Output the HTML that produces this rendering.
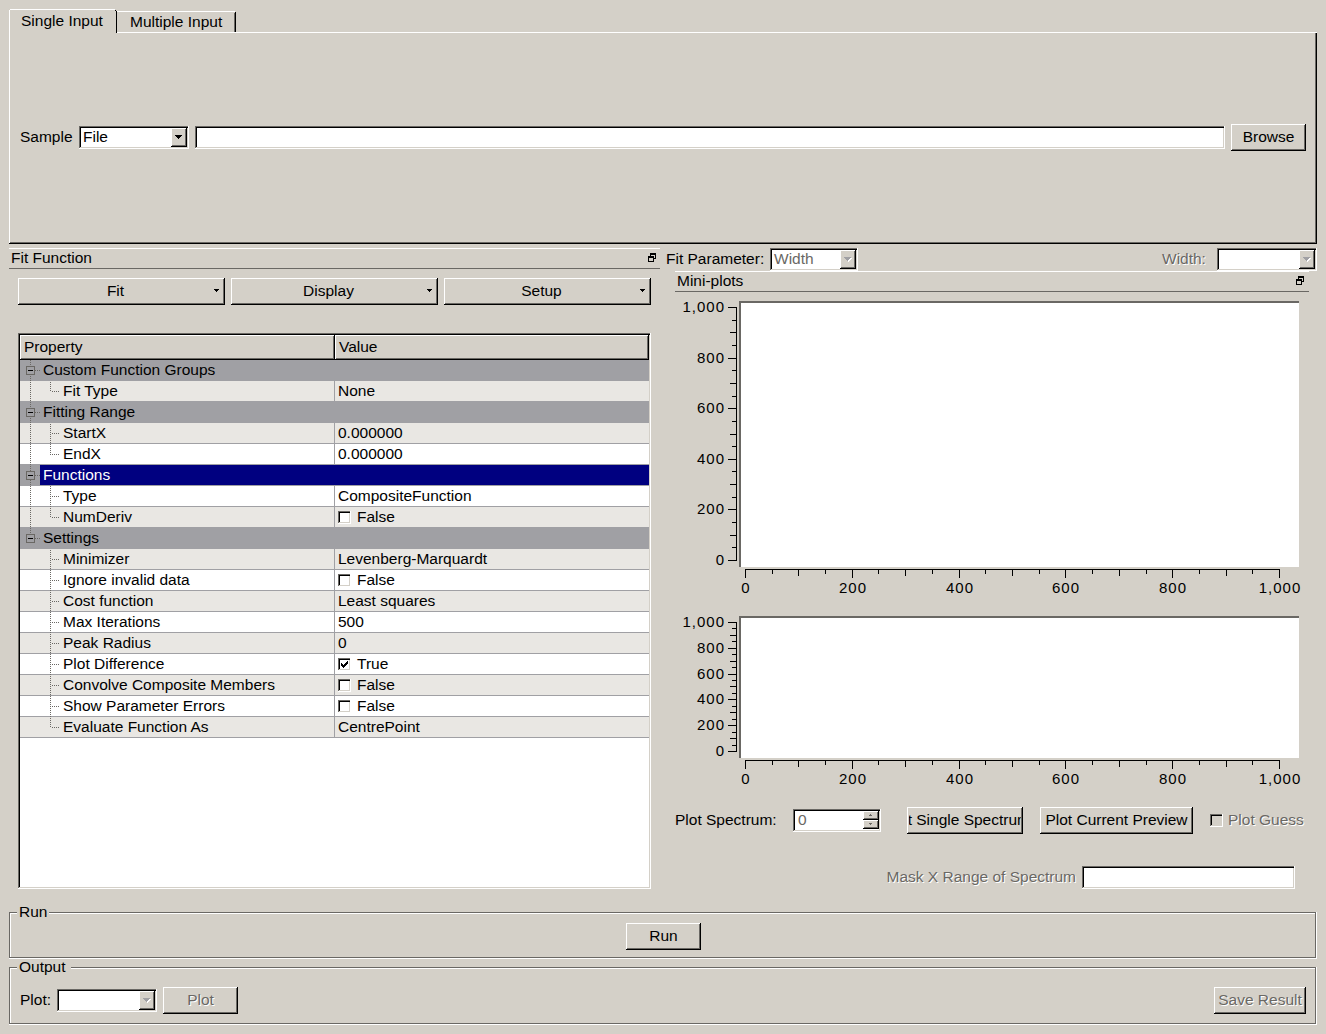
<!DOCTYPE html>
<html><head><meta charset="utf-8"><style>
html,body{margin:0;padding:0;}
body{width:1326px;height:1034px;background:#d4d0c8;position:relative;overflow:hidden;font-family:"Liberation Sans",sans-serif;}
body>div{position:absolute;}
</style></head><body>
<div style="left:9px;top:32px;width:1308px;height:1px;background:#ffffff;"></div>
<div style="left:9px;top:10px;width:1px;height:234px;background:#ffffff;"></div>
<div style="left:9px;top:243px;width:1308px;height:1px;background:#000000;"></div>
<div style="left:10px;top:242px;width:1306px;height:1px;background:#6a6864;"></div>
<div style="left:1316px;top:32px;width:1px;height:212px;background:#000000;"></div>
<div style="left:1315px;top:33px;width:1px;height:210px;background:#6a6864;"></div>
<div style="left:10px;top:10px;width:106px;height:23px;background:#d4d0c8;"></div>
<div style="left:10px;top:9px;width:105px;height:1px;background:#ffffff;"></div>
<div style="left:9px;top:10px;width:1px;height:23px;background:#ffffff;"></div>
<div style="left:116px;top:11px;width:1px;height:22px;background:#000000;"></div>
<div style="left:115px;top:10px;width:1px;height:1px;background:#000000;"></div>
<div style="left:117px;top:11px;width:118px;height:1px;background:#ffffff;"></div>
<div style="left:235px;top:12px;width:1px;height:20px;background:#000000;"></div>
<div style="left:234px;top:13px;width:1px;height:19px;background:#6a6864;"></div>
<div style="left:117px;top:32px;width:1200px;height:1px;background:#ffffff;"></div>
<div style="left:21px;top:12px;font-size:15.5px;line-height:18px;color:#000000;white-space:nowrap;">Single Input</div>
<div style="left:130px;top:13px;font-size:15.5px;line-height:18px;color:#000000;white-space:nowrap;">Multiple Input</div>
<div style="left:20px;top:128px;font-size:15.5px;line-height:18px;color:#000000;white-space:nowrap;">Sample</div>
<div style="left:79px;top:126px;width:110px;height:23px;background:#ffffff;"></div>
<div style="left:79px;top:126px;width:110px;height:1px;background:#6a6864;"></div>
<div style="left:79px;top:126px;width:1px;height:23px;background:#6a6864;"></div>
<div style="left:79px;top:148px;width:110px;height:1px;background:#ffffff;"></div>
<div style="left:188px;top:126px;width:1px;height:23px;background:#ffffff;"></div>
<div style="left:80px;top:127px;width:108px;height:1px;background:#000000;"></div>
<div style="left:80px;top:127px;width:1px;height:21px;background:#000000;"></div>
<div style="left:80px;top:147px;width:108px;height:1px;background:#d4d0c8;"></div>
<div style="left:187px;top:128px;width:1px;height:20px;background:#d4d0c8;"></div>
<div style="left:171px;top:128px;width:16px;height:19px;background:#d4d0c8;"></div>
<div style="left:171px;top:128px;width:16px;height:1px;background:#ffffff;"></div>
<div style="left:171px;top:128px;width:1px;height:19px;background:#ffffff;"></div>
<div style="left:171px;top:146px;width:16px;height:1px;background:#000000;"></div>
<div style="left:186px;top:128px;width:1px;height:19px;background:#000000;"></div>
<div style="left:172px;top:145px;width:14px;height:1px;background:#6a6864;"></div>
<div style="left:185px;top:129px;width:1px;height:17px;background:#6a6864;"></div>
<div style="left:175px;top:135px;width:7px;height:1px;background:#000000;"></div>
<div style="left:176px;top:136px;width:5px;height:1px;background:#000000;"></div>
<div style="left:177px;top:137px;width:3px;height:1px;background:#000000;"></div>
<div style="left:178px;top:138px;width:1px;height:1px;background:#000000;"></div>
<div style="left:83px;top:128px;font-size:15.5px;line-height:18px;color:#000000;white-space:nowrap;">File</div>
<div style="left:195px;top:126px;width:1030px;height:23px;background:#ffffff;"></div>
<div style="left:195px;top:126px;width:1030px;height:1px;background:#6a6864;"></div>
<div style="left:195px;top:126px;width:1px;height:23px;background:#6a6864;"></div>
<div style="left:195px;top:148px;width:1030px;height:1px;background:#ffffff;"></div>
<div style="left:1224px;top:126px;width:1px;height:23px;background:#ffffff;"></div>
<div style="left:196px;top:127px;width:1028px;height:1px;background:#000000;"></div>
<div style="left:196px;top:127px;width:1px;height:21px;background:#000000;"></div>
<div style="left:196px;top:147px;width:1028px;height:1px;background:#d4d0c8;"></div>
<div style="left:1223px;top:128px;width:1px;height:20px;background:#d4d0c8;"></div>
<div style="left:1231px;top:124px;width:75px;height:27px;background:#d4d0c8;"></div>
<div style="left:1231px;top:124px;width:75px;height:1px;background:#ffffff;"></div>
<div style="left:1231px;top:124px;width:1px;height:27px;background:#ffffff;"></div>
<div style="left:1231px;top:150px;width:75px;height:1px;background:#000000;"></div>
<div style="left:1305px;top:124px;width:1px;height:27px;background:#000000;"></div>
<div style="left:1232px;top:149px;width:73px;height:1px;background:#6a6864;"></div>
<div style="left:1304px;top:125px;width:1px;height:25px;background:#6a6864;"></div>
<div style="left:1231px;top:128px;font-size:15.5px;line-height:18px;color:#000000;white-space:nowrap;width:75px;text-align:center;">Browse</div>
<div style="left:9px;top:248px;width:651px;height:1px;background:#ffffff;"></div>
<div style="left:9px;top:268px;width:651px;height:1px;background:#6a6864;"></div>
<div style="left:11px;top:249px;font-size:15.5px;line-height:18px;color:#000000;white-space:nowrap;">Fit Function</div>
<div style="left:650px;top:253px;width:6px;height:1px;background:#000000;"></div>
<div style="left:650px;top:254px;width:6px;height:1px;background:#000000;"></div>
<div style="left:650px;top:253px;width:1px;height:6px;background:#000000;"></div>
<div style="left:655px;top:253px;width:1px;height:6px;background:#000000;"></div>
<div style="left:650px;top:258px;width:6px;height:1px;background:#000000;"></div>
<div style="left:648px;top:256px;width:6px;height:6px;background:#d4d0c8;"></div>
<div style="left:648px;top:256px;width:6px;height:1px;background:#000000;"></div>
<div style="left:648px;top:257px;width:6px;height:1px;background:#000000;"></div>
<div style="left:648px;top:256px;width:1px;height:6px;background:#000000;"></div>
<div style="left:653px;top:256px;width:1px;height:6px;background:#000000;"></div>
<div style="left:648px;top:261px;width:6px;height:1px;background:#000000;"></div>
<div style="left:18px;top:278px;width:207px;height:27px;background:#d4d0c8;"></div>
<div style="left:18px;top:278px;width:207px;height:1px;background:#ffffff;"></div>
<div style="left:18px;top:278px;width:1px;height:27px;background:#ffffff;"></div>
<div style="left:18px;top:304px;width:207px;height:1px;background:#000000;"></div>
<div style="left:224px;top:278px;width:1px;height:27px;background:#000000;"></div>
<div style="left:19px;top:303px;width:205px;height:1px;background:#6a6864;"></div>
<div style="left:223px;top:279px;width:1px;height:25px;background:#6a6864;"></div>
<div style="left:18px;top:282px;font-size:15.5px;line-height:18px;color:#000000;white-space:nowrap;width:195px;text-align:center;">Fit</div>
<div style="left:214px;top:289px;width:5px;height:1px;background:#000000;"></div>
<div style="left:215px;top:290px;width:3px;height:1px;background:#000000;"></div>
<div style="left:216px;top:291px;width:1px;height:1px;background:#000000;"></div>
<div style="left:231px;top:278px;width:207px;height:27px;background:#d4d0c8;"></div>
<div style="left:231px;top:278px;width:207px;height:1px;background:#ffffff;"></div>
<div style="left:231px;top:278px;width:1px;height:27px;background:#ffffff;"></div>
<div style="left:231px;top:304px;width:207px;height:1px;background:#000000;"></div>
<div style="left:437px;top:278px;width:1px;height:27px;background:#000000;"></div>
<div style="left:232px;top:303px;width:205px;height:1px;background:#6a6864;"></div>
<div style="left:436px;top:279px;width:1px;height:25px;background:#6a6864;"></div>
<div style="left:231px;top:282px;font-size:15.5px;line-height:18px;color:#000000;white-space:nowrap;width:195px;text-align:center;">Display</div>
<div style="left:427px;top:289px;width:5px;height:1px;background:#000000;"></div>
<div style="left:428px;top:290px;width:3px;height:1px;background:#000000;"></div>
<div style="left:429px;top:291px;width:1px;height:1px;background:#000000;"></div>
<div style="left:444px;top:278px;width:207px;height:27px;background:#d4d0c8;"></div>
<div style="left:444px;top:278px;width:207px;height:1px;background:#ffffff;"></div>
<div style="left:444px;top:278px;width:1px;height:27px;background:#ffffff;"></div>
<div style="left:444px;top:304px;width:207px;height:1px;background:#000000;"></div>
<div style="left:650px;top:278px;width:1px;height:27px;background:#000000;"></div>
<div style="left:445px;top:303px;width:205px;height:1px;background:#6a6864;"></div>
<div style="left:649px;top:279px;width:1px;height:25px;background:#6a6864;"></div>
<div style="left:444px;top:282px;font-size:15.5px;line-height:18px;color:#000000;white-space:nowrap;width:195px;text-align:center;">Setup</div>
<div style="left:640px;top:289px;width:5px;height:1px;background:#000000;"></div>
<div style="left:641px;top:290px;width:3px;height:1px;background:#000000;"></div>
<div style="left:642px;top:291px;width:1px;height:1px;background:#000000;"></div>
<div style="left:18px;top:333px;width:633px;height:556px;background:#ffffff;"></div>
<div style="left:18px;top:333px;width:633px;height:1px;background:#6a6864;"></div>
<div style="left:18px;top:333px;width:1px;height:556px;background:#6a6864;"></div>
<div style="left:18px;top:888px;width:633px;height:1px;background:#ffffff;"></div>
<div style="left:650px;top:333px;width:1px;height:556px;background:#ffffff;"></div>
<div style="left:19px;top:334px;width:631px;height:1px;background:#000000;"></div>
<div style="left:19px;top:334px;width:1px;height:554px;background:#000000;"></div>
<div style="left:19px;top:887px;width:631px;height:1px;background:#d4d0c8;"></div>
<div style="left:649px;top:335px;width:1px;height:553px;background:#d4d0c8;"></div>
<div style="left:20px;top:335px;width:315px;height:25px;background:#d4d0c8;"></div>
<div style="left:20px;top:335px;width:315px;height:1px;background:#ffffff;"></div>
<div style="left:20px;top:335px;width:1px;height:25px;background:#ffffff;"></div>
<div style="left:20px;top:359px;width:315px;height:1px;background:#000000;"></div>
<div style="left:334px;top:335px;width:1px;height:25px;background:#000000;"></div>
<div style="left:21px;top:358px;width:313px;height:1px;background:#6a6864;"></div>
<div style="left:333px;top:336px;width:1px;height:23px;background:#6a6864;"></div>
<div style="left:24px;top:338px;font-size:15.5px;line-height:18px;color:#000000;white-space:nowrap;">Property</div>
<div style="left:335px;top:335px;width:314px;height:25px;background:#d4d0c8;"></div>
<div style="left:335px;top:335px;width:314px;height:1px;background:#ffffff;"></div>
<div style="left:335px;top:335px;width:1px;height:25px;background:#ffffff;"></div>
<div style="left:335px;top:359px;width:314px;height:1px;background:#000000;"></div>
<div style="left:648px;top:335px;width:1px;height:25px;background:#000000;"></div>
<div style="left:336px;top:358px;width:312px;height:1px;background:#6a6864;"></div>
<div style="left:647px;top:336px;width:1px;height:23px;background:#6a6864;"></div>
<div style="left:339px;top:338px;font-size:15.5px;line-height:18px;color:#000000;white-space:nowrap;">Value</div>
<div style="left:20px;top:360px;width:629px;height:21px;background:#a0a0a4;"></div>
<div style="left:43px;top:361px;font-size:15.5px;line-height:18px;color:#000000;white-space:nowrap;">Custom Function Groups</div>
<div style="left:20px;top:381px;width:629px;height:20px;background:#e9e7e3;"></div>
<div style="left:20px;top:401px;width:629px;height:1px;background:#a0a0a4;"></div>
<div style="left:334px;top:381px;width:1px;height:21px;background:#a0a0a4;"></div>
<div style="left:63px;top:382px;font-size:15.5px;line-height:18px;color:#000000;white-space:nowrap;">Fit Type</div>
<div style="left:338px;top:382px;font-size:15.5px;line-height:18px;color:#000000;white-space:nowrap;">None</div>
<div style="left:20px;top:402px;width:629px;height:21px;background:#a0a0a4;"></div>
<div style="left:43px;top:403px;font-size:15.5px;line-height:18px;color:#000000;white-space:nowrap;">Fitting Range</div>
<div style="left:20px;top:423px;width:629px;height:20px;background:#e9e7e3;"></div>
<div style="left:20px;top:443px;width:629px;height:1px;background:#a0a0a4;"></div>
<div style="left:334px;top:423px;width:1px;height:21px;background:#a0a0a4;"></div>
<div style="left:63px;top:424px;font-size:15.5px;line-height:18px;color:#000000;white-space:nowrap;">StartX</div>
<div style="left:338px;top:424px;font-size:15.5px;line-height:18px;color:#000000;white-space:nowrap;">0.000000</div>
<div style="left:20px;top:444px;width:629px;height:20px;background:#ffffff;"></div>
<div style="left:20px;top:464px;width:629px;height:1px;background:#a0a0a4;"></div>
<div style="left:334px;top:444px;width:1px;height:21px;background:#a0a0a4;"></div>
<div style="left:63px;top:445px;font-size:15.5px;line-height:18px;color:#000000;white-space:nowrap;">EndX</div>
<div style="left:338px;top:445px;font-size:15.5px;line-height:18px;color:#000000;white-space:nowrap;">0.000000</div>
<div style="left:20px;top:465px;width:629px;height:21px;background:#a0a0a4;"></div>
<div style="left:40px;top:465px;width:609px;height:20px;background:#000080;"></div>
<div style="left:43px;top:466px;font-size:15.5px;line-height:18px;color:#ffffff;white-space:nowrap;">Functions</div>
<div style="left:20px;top:486px;width:629px;height:20px;background:#ffffff;"></div>
<div style="left:20px;top:506px;width:629px;height:1px;background:#a0a0a4;"></div>
<div style="left:334px;top:486px;width:1px;height:21px;background:#a0a0a4;"></div>
<div style="left:63px;top:487px;font-size:15.5px;line-height:18px;color:#000000;white-space:nowrap;">Type</div>
<div style="left:338px;top:487px;font-size:15.5px;line-height:18px;color:#000000;white-space:nowrap;">CompositeFunction</div>
<div style="left:20px;top:507px;width:629px;height:20px;background:#e9e7e3;"></div>
<div style="left:20px;top:527px;width:629px;height:1px;background:#a0a0a4;"></div>
<div style="left:334px;top:507px;width:1px;height:21px;background:#a0a0a4;"></div>
<div style="left:63px;top:508px;font-size:15.5px;line-height:18px;color:#000000;white-space:nowrap;">NumDeriv</div>
<div style="left:338px;top:511px;width:13px;height:13px;background:#ffffff;"></div>
<div style="left:338px;top:511px;width:13px;height:1px;background:#6a6864;"></div>
<div style="left:338px;top:511px;width:1px;height:13px;background:#6a6864;"></div>
<div style="left:338px;top:523px;width:13px;height:1px;background:#ffffff;"></div>
<div style="left:350px;top:511px;width:1px;height:13px;background:#ffffff;"></div>
<div style="left:339px;top:512px;width:11px;height:1px;background:#000000;"></div>
<div style="left:339px;top:512px;width:1px;height:11px;background:#000000;"></div>
<div style="left:339px;top:522px;width:11px;height:1px;background:#d4d0c8;"></div>
<div style="left:349px;top:513px;width:1px;height:10px;background:#d4d0c8;"></div>
<div style="left:357px;top:508px;font-size:15.5px;line-height:18px;color:#000000;white-space:nowrap;">False</div>
<div style="left:20px;top:528px;width:629px;height:21px;background:#a0a0a4;"></div>
<div style="left:43px;top:529px;font-size:15.5px;line-height:18px;color:#000000;white-space:nowrap;">Settings</div>
<div style="left:20px;top:549px;width:629px;height:20px;background:#e9e7e3;"></div>
<div style="left:20px;top:569px;width:629px;height:1px;background:#a0a0a4;"></div>
<div style="left:334px;top:549px;width:1px;height:21px;background:#a0a0a4;"></div>
<div style="left:63px;top:550px;font-size:15.5px;line-height:18px;color:#000000;white-space:nowrap;">Minimizer</div>
<div style="left:338px;top:550px;font-size:15.5px;line-height:18px;color:#000000;white-space:nowrap;">Levenberg-Marquardt</div>
<div style="left:20px;top:570px;width:629px;height:20px;background:#ffffff;"></div>
<div style="left:20px;top:590px;width:629px;height:1px;background:#a0a0a4;"></div>
<div style="left:334px;top:570px;width:1px;height:21px;background:#a0a0a4;"></div>
<div style="left:63px;top:571px;font-size:15.5px;line-height:18px;color:#000000;white-space:nowrap;">Ignore invalid data</div>
<div style="left:338px;top:574px;width:13px;height:13px;background:#ffffff;"></div>
<div style="left:338px;top:574px;width:13px;height:1px;background:#6a6864;"></div>
<div style="left:338px;top:574px;width:1px;height:13px;background:#6a6864;"></div>
<div style="left:338px;top:586px;width:13px;height:1px;background:#ffffff;"></div>
<div style="left:350px;top:574px;width:1px;height:13px;background:#ffffff;"></div>
<div style="left:339px;top:575px;width:11px;height:1px;background:#000000;"></div>
<div style="left:339px;top:575px;width:1px;height:11px;background:#000000;"></div>
<div style="left:339px;top:585px;width:11px;height:1px;background:#d4d0c8;"></div>
<div style="left:349px;top:576px;width:1px;height:10px;background:#d4d0c8;"></div>
<div style="left:357px;top:571px;font-size:15.5px;line-height:18px;color:#000000;white-space:nowrap;">False</div>
<div style="left:20px;top:591px;width:629px;height:20px;background:#e9e7e3;"></div>
<div style="left:20px;top:611px;width:629px;height:1px;background:#a0a0a4;"></div>
<div style="left:334px;top:591px;width:1px;height:21px;background:#a0a0a4;"></div>
<div style="left:63px;top:592px;font-size:15.5px;line-height:18px;color:#000000;white-space:nowrap;">Cost function</div>
<div style="left:338px;top:592px;font-size:15.5px;line-height:18px;color:#000000;white-space:nowrap;">Least squares</div>
<div style="left:20px;top:612px;width:629px;height:20px;background:#ffffff;"></div>
<div style="left:20px;top:632px;width:629px;height:1px;background:#a0a0a4;"></div>
<div style="left:334px;top:612px;width:1px;height:21px;background:#a0a0a4;"></div>
<div style="left:63px;top:613px;font-size:15.5px;line-height:18px;color:#000000;white-space:nowrap;">Max Iterations</div>
<div style="left:338px;top:613px;font-size:15.5px;line-height:18px;color:#000000;white-space:nowrap;">500</div>
<div style="left:20px;top:633px;width:629px;height:20px;background:#e9e7e3;"></div>
<div style="left:20px;top:653px;width:629px;height:1px;background:#a0a0a4;"></div>
<div style="left:334px;top:633px;width:1px;height:21px;background:#a0a0a4;"></div>
<div style="left:63px;top:634px;font-size:15.5px;line-height:18px;color:#000000;white-space:nowrap;">Peak Radius</div>
<div style="left:338px;top:634px;font-size:15.5px;line-height:18px;color:#000000;white-space:nowrap;">0</div>
<div style="left:20px;top:654px;width:629px;height:20px;background:#ffffff;"></div>
<div style="left:20px;top:674px;width:629px;height:1px;background:#a0a0a4;"></div>
<div style="left:334px;top:654px;width:1px;height:21px;background:#a0a0a4;"></div>
<div style="left:63px;top:655px;font-size:15.5px;line-height:18px;color:#000000;white-space:nowrap;">Plot Difference</div>
<div style="left:338px;top:658px;width:13px;height:13px;background:#ffffff;"></div>
<div style="left:338px;top:658px;width:13px;height:1px;background:#6a6864;"></div>
<div style="left:338px;top:658px;width:1px;height:13px;background:#6a6864;"></div>
<div style="left:338px;top:670px;width:13px;height:1px;background:#ffffff;"></div>
<div style="left:350px;top:658px;width:1px;height:13px;background:#ffffff;"></div>
<div style="left:339px;top:659px;width:11px;height:1px;background:#000000;"></div>
<div style="left:339px;top:659px;width:1px;height:11px;background:#000000;"></div>
<div style="left:339px;top:669px;width:11px;height:1px;background:#d4d0c8;"></div>
<div style="left:349px;top:660px;width:1px;height:10px;background:#d4d0c8;"></div>
<div style="left:341px;top:663px;width:1px;height:3px;background:#000000;"></div>
<div style="left:342px;top:664px;width:1px;height:3px;background:#000000;"></div>
<div style="left:343px;top:665px;width:1px;height:3px;background:#000000;"></div>
<div style="left:344px;top:664px;width:1px;height:3px;background:#000000;"></div>
<div style="left:345px;top:663px;width:1px;height:3px;background:#000000;"></div>
<div style="left:346px;top:662px;width:1px;height:3px;background:#000000;"></div>
<div style="left:347px;top:661px;width:1px;height:3px;background:#000000;"></div>
<div style="left:357px;top:655px;font-size:15.5px;line-height:18px;color:#000000;white-space:nowrap;">True</div>
<div style="left:20px;top:675px;width:629px;height:20px;background:#e9e7e3;"></div>
<div style="left:20px;top:695px;width:629px;height:1px;background:#a0a0a4;"></div>
<div style="left:334px;top:675px;width:1px;height:21px;background:#a0a0a4;"></div>
<div style="left:63px;top:676px;font-size:15.5px;line-height:18px;color:#000000;white-space:nowrap;">Convolve Composite Members</div>
<div style="left:338px;top:679px;width:13px;height:13px;background:#ffffff;"></div>
<div style="left:338px;top:679px;width:13px;height:1px;background:#6a6864;"></div>
<div style="left:338px;top:679px;width:1px;height:13px;background:#6a6864;"></div>
<div style="left:338px;top:691px;width:13px;height:1px;background:#ffffff;"></div>
<div style="left:350px;top:679px;width:1px;height:13px;background:#ffffff;"></div>
<div style="left:339px;top:680px;width:11px;height:1px;background:#000000;"></div>
<div style="left:339px;top:680px;width:1px;height:11px;background:#000000;"></div>
<div style="left:339px;top:690px;width:11px;height:1px;background:#d4d0c8;"></div>
<div style="left:349px;top:681px;width:1px;height:10px;background:#d4d0c8;"></div>
<div style="left:357px;top:676px;font-size:15.5px;line-height:18px;color:#000000;white-space:nowrap;">False</div>
<div style="left:20px;top:696px;width:629px;height:20px;background:#ffffff;"></div>
<div style="left:20px;top:716px;width:629px;height:1px;background:#a0a0a4;"></div>
<div style="left:334px;top:696px;width:1px;height:21px;background:#a0a0a4;"></div>
<div style="left:63px;top:697px;font-size:15.5px;line-height:18px;color:#000000;white-space:nowrap;">Show Parameter Errors</div>
<div style="left:338px;top:700px;width:13px;height:13px;background:#ffffff;"></div>
<div style="left:338px;top:700px;width:13px;height:1px;background:#6a6864;"></div>
<div style="left:338px;top:700px;width:1px;height:13px;background:#6a6864;"></div>
<div style="left:338px;top:712px;width:13px;height:1px;background:#ffffff;"></div>
<div style="left:350px;top:700px;width:1px;height:13px;background:#ffffff;"></div>
<div style="left:339px;top:701px;width:11px;height:1px;background:#000000;"></div>
<div style="left:339px;top:701px;width:1px;height:11px;background:#000000;"></div>
<div style="left:339px;top:711px;width:11px;height:1px;background:#d4d0c8;"></div>
<div style="left:349px;top:702px;width:1px;height:10px;background:#d4d0c8;"></div>
<div style="left:357px;top:697px;font-size:15.5px;line-height:18px;color:#000000;white-space:nowrap;">False</div>
<div style="left:20px;top:717px;width:629px;height:20px;background:#e9e7e3;"></div>
<div style="left:20px;top:737px;width:629px;height:1px;background:#a0a0a4;"></div>
<div style="left:334px;top:717px;width:1px;height:21px;background:#a0a0a4;"></div>
<div style="left:63px;top:718px;font-size:15.5px;line-height:18px;color:#000000;white-space:nowrap;">Evaluate Function As</div>
<div style="left:338px;top:718px;font-size:15.5px;line-height:18px;color:#000000;white-space:nowrap;">CentrePoint</div>
<div style="left:26px;top:366px;width:9px;height:9px;background:#6a6864;"></div>
<div style="left:27px;top:367px;width:7px;height:7px;background:#a0a0a4;"></div>
<div style="left:28px;top:370px;width:5px;height:1px;background:#000000;"></div>
<div style="left:35px;top:370px;width:1px;height:1px;background:#6a6864;"></div>
<div style="left:37px;top:370px;width:1px;height:1px;background:#6a6864;"></div>
<div style="left:39px;top:370px;width:1px;height:1px;background:#6a6864;"></div>
<div style="left:26px;top:408px;width:9px;height:9px;background:#6a6864;"></div>
<div style="left:27px;top:409px;width:7px;height:7px;background:#a0a0a4;"></div>
<div style="left:28px;top:412px;width:5px;height:1px;background:#000000;"></div>
<div style="left:35px;top:412px;width:1px;height:1px;background:#6a6864;"></div>
<div style="left:37px;top:412px;width:1px;height:1px;background:#6a6864;"></div>
<div style="left:39px;top:412px;width:1px;height:1px;background:#6a6864;"></div>
<div style="left:26px;top:471px;width:9px;height:9px;background:#6a6864;"></div>
<div style="left:27px;top:472px;width:7px;height:7px;background:#a0a0a4;"></div>
<div style="left:28px;top:475px;width:5px;height:1px;background:#000000;"></div>
<div style="left:35px;top:475px;width:1px;height:1px;background:#6a6864;"></div>
<div style="left:37px;top:475px;width:1px;height:1px;background:#6a6864;"></div>
<div style="left:39px;top:475px;width:1px;height:1px;background:#6a6864;"></div>
<div style="left:26px;top:534px;width:9px;height:9px;background:#6a6864;"></div>
<div style="left:27px;top:535px;width:7px;height:7px;background:#a0a0a4;"></div>
<div style="left:28px;top:538px;width:5px;height:1px;background:#000000;"></div>
<div style="left:35px;top:538px;width:1px;height:1px;background:#6a6864;"></div>
<div style="left:37px;top:538px;width:1px;height:1px;background:#6a6864;"></div>
<div style="left:39px;top:538px;width:1px;height:1px;background:#6a6864;"></div>
<div style="left:30px;top:360px;width:1px;height:1px;background:#6a6864;"></div>
<div style="left:30px;top:362px;width:1px;height:1px;background:#6a6864;"></div>
<div style="left:30px;top:364px;width:1px;height:1px;background:#6a6864;"></div>
<div style="left:30px;top:376px;width:1px;height:1px;background:#6a6864;"></div>
<div style="left:30px;top:378px;width:1px;height:1px;background:#6a6864;"></div>
<div style="left:30px;top:380px;width:1px;height:1px;background:#6a6864;"></div>
<div style="left:30px;top:382px;width:1px;height:1px;background:#6a6864;"></div>
<div style="left:30px;top:384px;width:1px;height:1px;background:#6a6864;"></div>
<div style="left:30px;top:386px;width:1px;height:1px;background:#6a6864;"></div>
<div style="left:30px;top:388px;width:1px;height:1px;background:#6a6864;"></div>
<div style="left:30px;top:390px;width:1px;height:1px;background:#6a6864;"></div>
<div style="left:30px;top:392px;width:1px;height:1px;background:#6a6864;"></div>
<div style="left:30px;top:394px;width:1px;height:1px;background:#6a6864;"></div>
<div style="left:30px;top:396px;width:1px;height:1px;background:#6a6864;"></div>
<div style="left:30px;top:398px;width:1px;height:1px;background:#6a6864;"></div>
<div style="left:30px;top:400px;width:1px;height:1px;background:#6a6864;"></div>
<div style="left:30px;top:402px;width:1px;height:1px;background:#6a6864;"></div>
<div style="left:30px;top:404px;width:1px;height:1px;background:#6a6864;"></div>
<div style="left:30px;top:406px;width:1px;height:1px;background:#6a6864;"></div>
<div style="left:30px;top:418px;width:1px;height:1px;background:#6a6864;"></div>
<div style="left:30px;top:420px;width:1px;height:1px;background:#6a6864;"></div>
<div style="left:30px;top:422px;width:1px;height:1px;background:#6a6864;"></div>
<div style="left:30px;top:424px;width:1px;height:1px;background:#6a6864;"></div>
<div style="left:30px;top:426px;width:1px;height:1px;background:#6a6864;"></div>
<div style="left:30px;top:428px;width:1px;height:1px;background:#6a6864;"></div>
<div style="left:30px;top:430px;width:1px;height:1px;background:#6a6864;"></div>
<div style="left:30px;top:432px;width:1px;height:1px;background:#6a6864;"></div>
<div style="left:30px;top:434px;width:1px;height:1px;background:#6a6864;"></div>
<div style="left:30px;top:436px;width:1px;height:1px;background:#6a6864;"></div>
<div style="left:30px;top:438px;width:1px;height:1px;background:#6a6864;"></div>
<div style="left:30px;top:440px;width:1px;height:1px;background:#6a6864;"></div>
<div style="left:30px;top:442px;width:1px;height:1px;background:#6a6864;"></div>
<div style="left:30px;top:444px;width:1px;height:1px;background:#6a6864;"></div>
<div style="left:30px;top:446px;width:1px;height:1px;background:#6a6864;"></div>
<div style="left:30px;top:448px;width:1px;height:1px;background:#6a6864;"></div>
<div style="left:30px;top:450px;width:1px;height:1px;background:#6a6864;"></div>
<div style="left:30px;top:452px;width:1px;height:1px;background:#6a6864;"></div>
<div style="left:30px;top:454px;width:1px;height:1px;background:#6a6864;"></div>
<div style="left:30px;top:456px;width:1px;height:1px;background:#6a6864;"></div>
<div style="left:30px;top:458px;width:1px;height:1px;background:#6a6864;"></div>
<div style="left:30px;top:460px;width:1px;height:1px;background:#6a6864;"></div>
<div style="left:30px;top:462px;width:1px;height:1px;background:#6a6864;"></div>
<div style="left:30px;top:464px;width:1px;height:1px;background:#6a6864;"></div>
<div style="left:30px;top:466px;width:1px;height:1px;background:#6a6864;"></div>
<div style="left:30px;top:468px;width:1px;height:1px;background:#6a6864;"></div>
<div style="left:30px;top:470px;width:1px;height:1px;background:#6a6864;"></div>
<div style="left:30px;top:480px;width:1px;height:1px;background:#6a6864;"></div>
<div style="left:30px;top:482px;width:1px;height:1px;background:#6a6864;"></div>
<div style="left:30px;top:484px;width:1px;height:1px;background:#6a6864;"></div>
<div style="left:30px;top:486px;width:1px;height:1px;background:#6a6864;"></div>
<div style="left:30px;top:488px;width:1px;height:1px;background:#6a6864;"></div>
<div style="left:30px;top:490px;width:1px;height:1px;background:#6a6864;"></div>
<div style="left:30px;top:492px;width:1px;height:1px;background:#6a6864;"></div>
<div style="left:30px;top:494px;width:1px;height:1px;background:#6a6864;"></div>
<div style="left:30px;top:496px;width:1px;height:1px;background:#6a6864;"></div>
<div style="left:30px;top:498px;width:1px;height:1px;background:#6a6864;"></div>
<div style="left:30px;top:500px;width:1px;height:1px;background:#6a6864;"></div>
<div style="left:30px;top:502px;width:1px;height:1px;background:#6a6864;"></div>
<div style="left:30px;top:504px;width:1px;height:1px;background:#6a6864;"></div>
<div style="left:30px;top:506px;width:1px;height:1px;background:#6a6864;"></div>
<div style="left:30px;top:508px;width:1px;height:1px;background:#6a6864;"></div>
<div style="left:30px;top:510px;width:1px;height:1px;background:#6a6864;"></div>
<div style="left:30px;top:512px;width:1px;height:1px;background:#6a6864;"></div>
<div style="left:30px;top:514px;width:1px;height:1px;background:#6a6864;"></div>
<div style="left:30px;top:516px;width:1px;height:1px;background:#6a6864;"></div>
<div style="left:30px;top:518px;width:1px;height:1px;background:#6a6864;"></div>
<div style="left:30px;top:520px;width:1px;height:1px;background:#6a6864;"></div>
<div style="left:30px;top:522px;width:1px;height:1px;background:#6a6864;"></div>
<div style="left:30px;top:524px;width:1px;height:1px;background:#6a6864;"></div>
<div style="left:30px;top:526px;width:1px;height:1px;background:#6a6864;"></div>
<div style="left:30px;top:528px;width:1px;height:1px;background:#6a6864;"></div>
<div style="left:30px;top:530px;width:1px;height:1px;background:#6a6864;"></div>
<div style="left:30px;top:532px;width:1px;height:1px;background:#6a6864;"></div>
<div style="left:50px;top:382px;width:1px;height:1px;background:#6a6864;"></div>
<div style="left:50px;top:384px;width:1px;height:1px;background:#6a6864;"></div>
<div style="left:50px;top:386px;width:1px;height:1px;background:#6a6864;"></div>
<div style="left:50px;top:388px;width:1px;height:1px;background:#6a6864;"></div>
<div style="left:50px;top:390px;width:1px;height:1px;background:#6a6864;"></div>
<div style="left:52px;top:391px;width:1px;height:1px;background:#6a6864;"></div>
<div style="left:54px;top:391px;width:1px;height:1px;background:#6a6864;"></div>
<div style="left:56px;top:391px;width:1px;height:1px;background:#6a6864;"></div>
<div style="left:58px;top:391px;width:1px;height:1px;background:#6a6864;"></div>
<div style="left:50px;top:424px;width:1px;height:1px;background:#6a6864;"></div>
<div style="left:50px;top:426px;width:1px;height:1px;background:#6a6864;"></div>
<div style="left:50px;top:428px;width:1px;height:1px;background:#6a6864;"></div>
<div style="left:50px;top:430px;width:1px;height:1px;background:#6a6864;"></div>
<div style="left:50px;top:432px;width:1px;height:1px;background:#6a6864;"></div>
<div style="left:50px;top:434px;width:1px;height:1px;background:#6a6864;"></div>
<div style="left:50px;top:436px;width:1px;height:1px;background:#6a6864;"></div>
<div style="left:50px;top:438px;width:1px;height:1px;background:#6a6864;"></div>
<div style="left:50px;top:440px;width:1px;height:1px;background:#6a6864;"></div>
<div style="left:50px;top:442px;width:1px;height:1px;background:#6a6864;"></div>
<div style="left:50px;top:444px;width:1px;height:1px;background:#6a6864;"></div>
<div style="left:50px;top:446px;width:1px;height:1px;background:#6a6864;"></div>
<div style="left:50px;top:448px;width:1px;height:1px;background:#6a6864;"></div>
<div style="left:50px;top:450px;width:1px;height:1px;background:#6a6864;"></div>
<div style="left:50px;top:452px;width:1px;height:1px;background:#6a6864;"></div>
<div style="left:50px;top:454px;width:1px;height:1px;background:#6a6864;"></div>
<div style="left:52px;top:433px;width:1px;height:1px;background:#6a6864;"></div>
<div style="left:54px;top:433px;width:1px;height:1px;background:#6a6864;"></div>
<div style="left:56px;top:433px;width:1px;height:1px;background:#6a6864;"></div>
<div style="left:58px;top:433px;width:1px;height:1px;background:#6a6864;"></div>
<div style="left:52px;top:454px;width:1px;height:1px;background:#6a6864;"></div>
<div style="left:54px;top:454px;width:1px;height:1px;background:#6a6864;"></div>
<div style="left:56px;top:454px;width:1px;height:1px;background:#6a6864;"></div>
<div style="left:58px;top:454px;width:1px;height:1px;background:#6a6864;"></div>
<div style="left:50px;top:486px;width:1px;height:1px;background:#6a6864;"></div>
<div style="left:50px;top:488px;width:1px;height:1px;background:#6a6864;"></div>
<div style="left:50px;top:490px;width:1px;height:1px;background:#6a6864;"></div>
<div style="left:50px;top:492px;width:1px;height:1px;background:#6a6864;"></div>
<div style="left:50px;top:494px;width:1px;height:1px;background:#6a6864;"></div>
<div style="left:50px;top:496px;width:1px;height:1px;background:#6a6864;"></div>
<div style="left:50px;top:498px;width:1px;height:1px;background:#6a6864;"></div>
<div style="left:50px;top:500px;width:1px;height:1px;background:#6a6864;"></div>
<div style="left:50px;top:502px;width:1px;height:1px;background:#6a6864;"></div>
<div style="left:50px;top:504px;width:1px;height:1px;background:#6a6864;"></div>
<div style="left:50px;top:506px;width:1px;height:1px;background:#6a6864;"></div>
<div style="left:50px;top:508px;width:1px;height:1px;background:#6a6864;"></div>
<div style="left:50px;top:510px;width:1px;height:1px;background:#6a6864;"></div>
<div style="left:50px;top:512px;width:1px;height:1px;background:#6a6864;"></div>
<div style="left:50px;top:514px;width:1px;height:1px;background:#6a6864;"></div>
<div style="left:50px;top:516px;width:1px;height:1px;background:#6a6864;"></div>
<div style="left:52px;top:496px;width:1px;height:1px;background:#6a6864;"></div>
<div style="left:54px;top:496px;width:1px;height:1px;background:#6a6864;"></div>
<div style="left:56px;top:496px;width:1px;height:1px;background:#6a6864;"></div>
<div style="left:58px;top:496px;width:1px;height:1px;background:#6a6864;"></div>
<div style="left:52px;top:517px;width:1px;height:1px;background:#6a6864;"></div>
<div style="left:54px;top:517px;width:1px;height:1px;background:#6a6864;"></div>
<div style="left:56px;top:517px;width:1px;height:1px;background:#6a6864;"></div>
<div style="left:58px;top:517px;width:1px;height:1px;background:#6a6864;"></div>
<div style="left:50px;top:550px;width:1px;height:1px;background:#6a6864;"></div>
<div style="left:50px;top:552px;width:1px;height:1px;background:#6a6864;"></div>
<div style="left:50px;top:554px;width:1px;height:1px;background:#6a6864;"></div>
<div style="left:50px;top:556px;width:1px;height:1px;background:#6a6864;"></div>
<div style="left:50px;top:558px;width:1px;height:1px;background:#6a6864;"></div>
<div style="left:50px;top:560px;width:1px;height:1px;background:#6a6864;"></div>
<div style="left:50px;top:562px;width:1px;height:1px;background:#6a6864;"></div>
<div style="left:50px;top:564px;width:1px;height:1px;background:#6a6864;"></div>
<div style="left:50px;top:566px;width:1px;height:1px;background:#6a6864;"></div>
<div style="left:50px;top:568px;width:1px;height:1px;background:#6a6864;"></div>
<div style="left:50px;top:570px;width:1px;height:1px;background:#6a6864;"></div>
<div style="left:50px;top:572px;width:1px;height:1px;background:#6a6864;"></div>
<div style="left:50px;top:574px;width:1px;height:1px;background:#6a6864;"></div>
<div style="left:50px;top:576px;width:1px;height:1px;background:#6a6864;"></div>
<div style="left:50px;top:578px;width:1px;height:1px;background:#6a6864;"></div>
<div style="left:50px;top:580px;width:1px;height:1px;background:#6a6864;"></div>
<div style="left:50px;top:582px;width:1px;height:1px;background:#6a6864;"></div>
<div style="left:50px;top:584px;width:1px;height:1px;background:#6a6864;"></div>
<div style="left:50px;top:586px;width:1px;height:1px;background:#6a6864;"></div>
<div style="left:50px;top:588px;width:1px;height:1px;background:#6a6864;"></div>
<div style="left:50px;top:590px;width:1px;height:1px;background:#6a6864;"></div>
<div style="left:50px;top:592px;width:1px;height:1px;background:#6a6864;"></div>
<div style="left:50px;top:594px;width:1px;height:1px;background:#6a6864;"></div>
<div style="left:50px;top:596px;width:1px;height:1px;background:#6a6864;"></div>
<div style="left:50px;top:598px;width:1px;height:1px;background:#6a6864;"></div>
<div style="left:50px;top:600px;width:1px;height:1px;background:#6a6864;"></div>
<div style="left:50px;top:602px;width:1px;height:1px;background:#6a6864;"></div>
<div style="left:50px;top:604px;width:1px;height:1px;background:#6a6864;"></div>
<div style="left:50px;top:606px;width:1px;height:1px;background:#6a6864;"></div>
<div style="left:50px;top:608px;width:1px;height:1px;background:#6a6864;"></div>
<div style="left:50px;top:610px;width:1px;height:1px;background:#6a6864;"></div>
<div style="left:50px;top:612px;width:1px;height:1px;background:#6a6864;"></div>
<div style="left:50px;top:614px;width:1px;height:1px;background:#6a6864;"></div>
<div style="left:50px;top:616px;width:1px;height:1px;background:#6a6864;"></div>
<div style="left:50px;top:618px;width:1px;height:1px;background:#6a6864;"></div>
<div style="left:50px;top:620px;width:1px;height:1px;background:#6a6864;"></div>
<div style="left:50px;top:622px;width:1px;height:1px;background:#6a6864;"></div>
<div style="left:50px;top:624px;width:1px;height:1px;background:#6a6864;"></div>
<div style="left:50px;top:626px;width:1px;height:1px;background:#6a6864;"></div>
<div style="left:50px;top:628px;width:1px;height:1px;background:#6a6864;"></div>
<div style="left:50px;top:630px;width:1px;height:1px;background:#6a6864;"></div>
<div style="left:50px;top:632px;width:1px;height:1px;background:#6a6864;"></div>
<div style="left:50px;top:634px;width:1px;height:1px;background:#6a6864;"></div>
<div style="left:50px;top:636px;width:1px;height:1px;background:#6a6864;"></div>
<div style="left:50px;top:638px;width:1px;height:1px;background:#6a6864;"></div>
<div style="left:50px;top:640px;width:1px;height:1px;background:#6a6864;"></div>
<div style="left:50px;top:642px;width:1px;height:1px;background:#6a6864;"></div>
<div style="left:50px;top:644px;width:1px;height:1px;background:#6a6864;"></div>
<div style="left:50px;top:646px;width:1px;height:1px;background:#6a6864;"></div>
<div style="left:50px;top:648px;width:1px;height:1px;background:#6a6864;"></div>
<div style="left:50px;top:650px;width:1px;height:1px;background:#6a6864;"></div>
<div style="left:50px;top:652px;width:1px;height:1px;background:#6a6864;"></div>
<div style="left:50px;top:654px;width:1px;height:1px;background:#6a6864;"></div>
<div style="left:50px;top:656px;width:1px;height:1px;background:#6a6864;"></div>
<div style="left:50px;top:658px;width:1px;height:1px;background:#6a6864;"></div>
<div style="left:50px;top:660px;width:1px;height:1px;background:#6a6864;"></div>
<div style="left:50px;top:662px;width:1px;height:1px;background:#6a6864;"></div>
<div style="left:50px;top:664px;width:1px;height:1px;background:#6a6864;"></div>
<div style="left:50px;top:666px;width:1px;height:1px;background:#6a6864;"></div>
<div style="left:50px;top:668px;width:1px;height:1px;background:#6a6864;"></div>
<div style="left:50px;top:670px;width:1px;height:1px;background:#6a6864;"></div>
<div style="left:50px;top:672px;width:1px;height:1px;background:#6a6864;"></div>
<div style="left:50px;top:674px;width:1px;height:1px;background:#6a6864;"></div>
<div style="left:50px;top:676px;width:1px;height:1px;background:#6a6864;"></div>
<div style="left:50px;top:678px;width:1px;height:1px;background:#6a6864;"></div>
<div style="left:50px;top:680px;width:1px;height:1px;background:#6a6864;"></div>
<div style="left:50px;top:682px;width:1px;height:1px;background:#6a6864;"></div>
<div style="left:50px;top:684px;width:1px;height:1px;background:#6a6864;"></div>
<div style="left:50px;top:686px;width:1px;height:1px;background:#6a6864;"></div>
<div style="left:50px;top:688px;width:1px;height:1px;background:#6a6864;"></div>
<div style="left:50px;top:690px;width:1px;height:1px;background:#6a6864;"></div>
<div style="left:50px;top:692px;width:1px;height:1px;background:#6a6864;"></div>
<div style="left:50px;top:694px;width:1px;height:1px;background:#6a6864;"></div>
<div style="left:50px;top:696px;width:1px;height:1px;background:#6a6864;"></div>
<div style="left:50px;top:698px;width:1px;height:1px;background:#6a6864;"></div>
<div style="left:50px;top:700px;width:1px;height:1px;background:#6a6864;"></div>
<div style="left:50px;top:702px;width:1px;height:1px;background:#6a6864;"></div>
<div style="left:50px;top:704px;width:1px;height:1px;background:#6a6864;"></div>
<div style="left:50px;top:706px;width:1px;height:1px;background:#6a6864;"></div>
<div style="left:50px;top:708px;width:1px;height:1px;background:#6a6864;"></div>
<div style="left:50px;top:710px;width:1px;height:1px;background:#6a6864;"></div>
<div style="left:50px;top:712px;width:1px;height:1px;background:#6a6864;"></div>
<div style="left:50px;top:714px;width:1px;height:1px;background:#6a6864;"></div>
<div style="left:50px;top:716px;width:1px;height:1px;background:#6a6864;"></div>
<div style="left:50px;top:718px;width:1px;height:1px;background:#6a6864;"></div>
<div style="left:50px;top:720px;width:1px;height:1px;background:#6a6864;"></div>
<div style="left:50px;top:722px;width:1px;height:1px;background:#6a6864;"></div>
<div style="left:50px;top:724px;width:1px;height:1px;background:#6a6864;"></div>
<div style="left:50px;top:726px;width:1px;height:1px;background:#6a6864;"></div>
<div style="left:52px;top:559px;width:1px;height:1px;background:#6a6864;"></div>
<div style="left:54px;top:559px;width:1px;height:1px;background:#6a6864;"></div>
<div style="left:56px;top:559px;width:1px;height:1px;background:#6a6864;"></div>
<div style="left:58px;top:559px;width:1px;height:1px;background:#6a6864;"></div>
<div style="left:52px;top:580px;width:1px;height:1px;background:#6a6864;"></div>
<div style="left:54px;top:580px;width:1px;height:1px;background:#6a6864;"></div>
<div style="left:56px;top:580px;width:1px;height:1px;background:#6a6864;"></div>
<div style="left:58px;top:580px;width:1px;height:1px;background:#6a6864;"></div>
<div style="left:52px;top:601px;width:1px;height:1px;background:#6a6864;"></div>
<div style="left:54px;top:601px;width:1px;height:1px;background:#6a6864;"></div>
<div style="left:56px;top:601px;width:1px;height:1px;background:#6a6864;"></div>
<div style="left:58px;top:601px;width:1px;height:1px;background:#6a6864;"></div>
<div style="left:52px;top:622px;width:1px;height:1px;background:#6a6864;"></div>
<div style="left:54px;top:622px;width:1px;height:1px;background:#6a6864;"></div>
<div style="left:56px;top:622px;width:1px;height:1px;background:#6a6864;"></div>
<div style="left:58px;top:622px;width:1px;height:1px;background:#6a6864;"></div>
<div style="left:52px;top:643px;width:1px;height:1px;background:#6a6864;"></div>
<div style="left:54px;top:643px;width:1px;height:1px;background:#6a6864;"></div>
<div style="left:56px;top:643px;width:1px;height:1px;background:#6a6864;"></div>
<div style="left:58px;top:643px;width:1px;height:1px;background:#6a6864;"></div>
<div style="left:52px;top:664px;width:1px;height:1px;background:#6a6864;"></div>
<div style="left:54px;top:664px;width:1px;height:1px;background:#6a6864;"></div>
<div style="left:56px;top:664px;width:1px;height:1px;background:#6a6864;"></div>
<div style="left:58px;top:664px;width:1px;height:1px;background:#6a6864;"></div>
<div style="left:52px;top:685px;width:1px;height:1px;background:#6a6864;"></div>
<div style="left:54px;top:685px;width:1px;height:1px;background:#6a6864;"></div>
<div style="left:56px;top:685px;width:1px;height:1px;background:#6a6864;"></div>
<div style="left:58px;top:685px;width:1px;height:1px;background:#6a6864;"></div>
<div style="left:52px;top:706px;width:1px;height:1px;background:#6a6864;"></div>
<div style="left:54px;top:706px;width:1px;height:1px;background:#6a6864;"></div>
<div style="left:56px;top:706px;width:1px;height:1px;background:#6a6864;"></div>
<div style="left:58px;top:706px;width:1px;height:1px;background:#6a6864;"></div>
<div style="left:52px;top:727px;width:1px;height:1px;background:#6a6864;"></div>
<div style="left:54px;top:727px;width:1px;height:1px;background:#6a6864;"></div>
<div style="left:56px;top:727px;width:1px;height:1px;background:#6a6864;"></div>
<div style="left:58px;top:727px;width:1px;height:1px;background:#6a6864;"></div>
<div style="left:666px;top:250px;font-size:15.5px;line-height:18px;color:#000000;white-space:nowrap;">Fit Parameter:</div>
<div style="left:770px;top:248px;width:88px;height:23px;background:#ffffff;"></div>
<div style="left:770px;top:248px;width:88px;height:1px;background:#6a6864;"></div>
<div style="left:770px;top:248px;width:1px;height:23px;background:#6a6864;"></div>
<div style="left:770px;top:270px;width:88px;height:1px;background:#ffffff;"></div>
<div style="left:857px;top:248px;width:1px;height:23px;background:#ffffff;"></div>
<div style="left:771px;top:249px;width:86px;height:1px;background:#000000;"></div>
<div style="left:771px;top:249px;width:1px;height:21px;background:#000000;"></div>
<div style="left:771px;top:269px;width:86px;height:1px;background:#d4d0c8;"></div>
<div style="left:856px;top:250px;width:1px;height:20px;background:#d4d0c8;"></div>
<div style="left:840px;top:250px;width:16px;height:19px;background:#d4d0c8;"></div>
<div style="left:840px;top:250px;width:16px;height:1px;background:#ffffff;"></div>
<div style="left:840px;top:250px;width:1px;height:19px;background:#ffffff;"></div>
<div style="left:840px;top:268px;width:16px;height:1px;background:#000000;"></div>
<div style="left:855px;top:250px;width:1px;height:19px;background:#000000;"></div>
<div style="left:841px;top:267px;width:14px;height:1px;background:#6a6864;"></div>
<div style="left:854px;top:251px;width:1px;height:17px;background:#6a6864;"></div>
<div style="left:845px;top:258px;width:7px;height:1px;background:#ffffff;"></div>
<div style="left:846px;top:259px;width:5px;height:1px;background:#ffffff;"></div>
<div style="left:847px;top:260px;width:3px;height:1px;background:#ffffff;"></div>
<div style="left:848px;top:261px;width:1px;height:1px;background:#ffffff;"></div>
<div style="left:844px;top:257px;width:7px;height:1px;background:#a0a0a4;"></div>
<div style="left:845px;top:258px;width:5px;height:1px;background:#a0a0a4;"></div>
<div style="left:846px;top:259px;width:3px;height:1px;background:#a0a0a4;"></div>
<div style="left:847px;top:260px;width:1px;height:1px;background:#a0a0a4;"></div>
<div style="left:774px;top:250px;font-size:15.5px;line-height:18px;color:#6a6864;white-space:nowrap;">Width</div>
<div style="left:1163px;top:251px;font-size:15.5px;line-height:18px;color:#fff;white-space:nowrap;">Width:</div>
<div style="left:1162px;top:250px;font-size:15.5px;line-height:18px;color:#6a6864;white-space:nowrap;">Width:</div>
<div style="left:1217px;top:248px;width:100px;height:23px;background:#ffffff;"></div>
<div style="left:1217px;top:248px;width:100px;height:1px;background:#6a6864;"></div>
<div style="left:1217px;top:248px;width:1px;height:23px;background:#6a6864;"></div>
<div style="left:1217px;top:270px;width:100px;height:1px;background:#ffffff;"></div>
<div style="left:1316px;top:248px;width:1px;height:23px;background:#ffffff;"></div>
<div style="left:1218px;top:249px;width:98px;height:1px;background:#000000;"></div>
<div style="left:1218px;top:249px;width:1px;height:21px;background:#000000;"></div>
<div style="left:1218px;top:269px;width:98px;height:1px;background:#d4d0c8;"></div>
<div style="left:1315px;top:250px;width:1px;height:20px;background:#d4d0c8;"></div>
<div style="left:1299px;top:250px;width:16px;height:19px;background:#d4d0c8;"></div>
<div style="left:1299px;top:250px;width:16px;height:1px;background:#ffffff;"></div>
<div style="left:1299px;top:250px;width:1px;height:19px;background:#ffffff;"></div>
<div style="left:1299px;top:268px;width:16px;height:1px;background:#000000;"></div>
<div style="left:1314px;top:250px;width:1px;height:19px;background:#000000;"></div>
<div style="left:1300px;top:267px;width:14px;height:1px;background:#6a6864;"></div>
<div style="left:1313px;top:251px;width:1px;height:17px;background:#6a6864;"></div>
<div style="left:1304px;top:258px;width:7px;height:1px;background:#ffffff;"></div>
<div style="left:1305px;top:259px;width:5px;height:1px;background:#ffffff;"></div>
<div style="left:1306px;top:260px;width:3px;height:1px;background:#ffffff;"></div>
<div style="left:1307px;top:261px;width:1px;height:1px;background:#ffffff;"></div>
<div style="left:1303px;top:257px;width:7px;height:1px;background:#a0a0a4;"></div>
<div style="left:1304px;top:258px;width:5px;height:1px;background:#a0a0a4;"></div>
<div style="left:1305px;top:259px;width:3px;height:1px;background:#a0a0a4;"></div>
<div style="left:1306px;top:260px;width:1px;height:1px;background:#a0a0a4;"></div>
<div style="left:675px;top:271px;width:634px;height:1px;background:#ffffff;"></div>
<div style="left:675px;top:291px;width:634px;height:1px;background:#6a6864;"></div>
<div style="left:677px;top:272px;font-size:15.5px;line-height:18px;color:#000000;white-space:nowrap;">Mini-plots</div>
<div style="left:1298px;top:276px;width:6px;height:1px;background:#000000;"></div>
<div style="left:1298px;top:277px;width:6px;height:1px;background:#000000;"></div>
<div style="left:1298px;top:276px;width:1px;height:6px;background:#000000;"></div>
<div style="left:1303px;top:276px;width:1px;height:6px;background:#000000;"></div>
<div style="left:1298px;top:281px;width:6px;height:1px;background:#000000;"></div>
<div style="left:1296px;top:279px;width:6px;height:6px;background:#d4d0c8;"></div>
<div style="left:1296px;top:279px;width:6px;height:1px;background:#000000;"></div>
<div style="left:1296px;top:280px;width:6px;height:1px;background:#000000;"></div>
<div style="left:1296px;top:279px;width:1px;height:6px;background:#000000;"></div>
<div style="left:1301px;top:279px;width:1px;height:6px;background:#000000;"></div>
<div style="left:1296px;top:284px;width:6px;height:1px;background:#000000;"></div>
<div style="left:739px;top:301px;width:560px;height:266px;background:#ffffff;"></div>
<div style="left:739px;top:301px;width:560px;height:2px;background:#6a6864;"></div>
<div style="left:739px;top:301px;width:2px;height:266px;background:#6a6864;"></div>
<div style="left:736px;top:307px;width:1px;height:254px;background:#000000;"></div>
<div style="left:728px;top:560px;width:8px;height:1px;background:#000000;"></div>
<div style="left:625px;top:551px;font-size:15px;line-height:18px;color:#000000;white-space:nowrap;letter-spacing:1px;width:100px;text-align:right;">0</div>
<div style="left:732px;top:547px;width:4px;height:1px;background:#000000;"></div>
<div style="left:730px;top:535px;width:6px;height:1px;background:#000000;"></div>
<div style="left:732px;top:522px;width:4px;height:1px;background:#000000;"></div>
<div style="left:728px;top:509px;width:8px;height:1px;background:#000000;"></div>
<div style="left:625px;top:500px;font-size:15px;line-height:18px;color:#000000;white-space:nowrap;letter-spacing:1px;width:100px;text-align:right;">200</div>
<div style="left:732px;top:497px;width:4px;height:1px;background:#000000;"></div>
<div style="left:730px;top:484px;width:6px;height:1px;background:#000000;"></div>
<div style="left:732px;top:471px;width:4px;height:1px;background:#000000;"></div>
<div style="left:728px;top:459px;width:8px;height:1px;background:#000000;"></div>
<div style="left:625px;top:450px;font-size:15px;line-height:18px;color:#000000;white-space:nowrap;letter-spacing:1px;width:100px;text-align:right;">400</div>
<div style="left:732px;top:446px;width:4px;height:1px;background:#000000;"></div>
<div style="left:730px;top:434px;width:6px;height:1px;background:#000000;"></div>
<div style="left:732px;top:421px;width:4px;height:1px;background:#000000;"></div>
<div style="left:728px;top:408px;width:8px;height:1px;background:#000000;"></div>
<div style="left:625px;top:399px;font-size:15px;line-height:18px;color:#000000;white-space:nowrap;letter-spacing:1px;width:100px;text-align:right;">600</div>
<div style="left:732px;top:396px;width:4px;height:1px;background:#000000;"></div>
<div style="left:730px;top:383px;width:6px;height:1px;background:#000000;"></div>
<div style="left:732px;top:370px;width:4px;height:1px;background:#000000;"></div>
<div style="left:728px;top:358px;width:8px;height:1px;background:#000000;"></div>
<div style="left:625px;top:349px;font-size:15px;line-height:18px;color:#000000;white-space:nowrap;letter-spacing:1px;width:100px;text-align:right;">800</div>
<div style="left:732px;top:345px;width:4px;height:1px;background:#000000;"></div>
<div style="left:730px;top:332px;width:6px;height:1px;background:#000000;"></div>
<div style="left:732px;top:320px;width:4px;height:1px;background:#000000;"></div>
<div style="left:728px;top:307px;width:8px;height:1px;background:#000000;"></div>
<div style="left:625px;top:298px;font-size:15px;line-height:18px;color:#000000;white-space:nowrap;letter-spacing:1px;width:100px;text-align:right;">1,000</div>
<div style="left:745px;top:569px;width:535px;height:1px;background:#000000;"></div>
<div style="left:745px;top:570px;width:1px;height:8px;background:#000000;"></div>
<div style="left:695px;top:579px;font-size:15px;line-height:18px;color:#000000;white-space:nowrap;letter-spacing:1px;width:102px;text-align:center;">0</div>
<div style="left:772px;top:570px;width:1px;height:4px;background:#000000;"></div>
<div style="left:798px;top:570px;width:1px;height:6px;background:#000000;"></div>
<div style="left:825px;top:570px;width:1px;height:4px;background:#000000;"></div>
<div style="left:852px;top:570px;width:1px;height:8px;background:#000000;"></div>
<div style="left:802px;top:579px;font-size:15px;line-height:18px;color:#000000;white-space:nowrap;letter-spacing:1px;width:102px;text-align:center;">200</div>
<div style="left:878px;top:570px;width:1px;height:4px;background:#000000;"></div>
<div style="left:905px;top:570px;width:1px;height:6px;background:#000000;"></div>
<div style="left:932px;top:570px;width:1px;height:4px;background:#000000;"></div>
<div style="left:959px;top:570px;width:1px;height:8px;background:#000000;"></div>
<div style="left:909px;top:579px;font-size:15px;line-height:18px;color:#000000;white-space:nowrap;letter-spacing:1px;width:102px;text-align:center;">400</div>
<div style="left:985px;top:570px;width:1px;height:4px;background:#000000;"></div>
<div style="left:1012px;top:570px;width:1px;height:6px;background:#000000;"></div>
<div style="left:1039px;top:570px;width:1px;height:4px;background:#000000;"></div>
<div style="left:1065px;top:570px;width:1px;height:8px;background:#000000;"></div>
<div style="left:1015px;top:579px;font-size:15px;line-height:18px;color:#000000;white-space:nowrap;letter-spacing:1px;width:102px;text-align:center;">600</div>
<div style="left:1092px;top:570px;width:1px;height:4px;background:#000000;"></div>
<div style="left:1119px;top:570px;width:1px;height:6px;background:#000000;"></div>
<div style="left:1146px;top:570px;width:1px;height:4px;background:#000000;"></div>
<div style="left:1172px;top:570px;width:1px;height:8px;background:#000000;"></div>
<div style="left:1122px;top:579px;font-size:15px;line-height:18px;color:#000000;white-space:nowrap;letter-spacing:1px;width:102px;text-align:center;">800</div>
<div style="left:1199px;top:570px;width:1px;height:4px;background:#000000;"></div>
<div style="left:1226px;top:570px;width:1px;height:6px;background:#000000;"></div>
<div style="left:1252px;top:570px;width:1px;height:4px;background:#000000;"></div>
<div style="left:1279px;top:570px;width:1px;height:8px;background:#000000;"></div>
<div style="left:1229px;top:579px;font-size:15px;line-height:18px;color:#000000;white-space:nowrap;letter-spacing:1px;width:102px;text-align:center;">1,000</div>
<div style="left:739px;top:616px;width:560px;height:142px;background:#ffffff;"></div>
<div style="left:739px;top:616px;width:560px;height:2px;background:#6a6864;"></div>
<div style="left:739px;top:616px;width:2px;height:142px;background:#6a6864;"></div>
<div style="left:736px;top:622px;width:1px;height:130px;background:#000000;"></div>
<div style="left:728px;top:751px;width:8px;height:1px;background:#000000;"></div>
<div style="left:625px;top:742px;font-size:15px;line-height:18px;color:#000000;white-space:nowrap;letter-spacing:1px;width:100px;text-align:right;">0</div>
<div style="left:732px;top:745px;width:4px;height:1px;background:#000000;"></div>
<div style="left:730px;top:738px;width:6px;height:1px;background:#000000;"></div>
<div style="left:732px;top:732px;width:4px;height:1px;background:#000000;"></div>
<div style="left:728px;top:725px;width:8px;height:1px;background:#000000;"></div>
<div style="left:625px;top:716px;font-size:15px;line-height:18px;color:#000000;white-space:nowrap;letter-spacing:1px;width:100px;text-align:right;">200</div>
<div style="left:732px;top:719px;width:4px;height:1px;background:#000000;"></div>
<div style="left:730px;top:712px;width:6px;height:1px;background:#000000;"></div>
<div style="left:732px;top:706px;width:4px;height:1px;background:#000000;"></div>
<div style="left:728px;top:699px;width:8px;height:1px;background:#000000;"></div>
<div style="left:625px;top:690px;font-size:15px;line-height:18px;color:#000000;white-space:nowrap;letter-spacing:1px;width:100px;text-align:right;">400</div>
<div style="left:732px;top:693px;width:4px;height:1px;background:#000000;"></div>
<div style="left:730px;top:686px;width:6px;height:1px;background:#000000;"></div>
<div style="left:732px;top:680px;width:4px;height:1px;background:#000000;"></div>
<div style="left:728px;top:674px;width:8px;height:1px;background:#000000;"></div>
<div style="left:625px;top:665px;font-size:15px;line-height:18px;color:#000000;white-space:nowrap;letter-spacing:1px;width:100px;text-align:right;">600</div>
<div style="left:732px;top:667px;width:4px;height:1px;background:#000000;"></div>
<div style="left:730px;top:661px;width:6px;height:1px;background:#000000;"></div>
<div style="left:732px;top:654px;width:4px;height:1px;background:#000000;"></div>
<div style="left:728px;top:648px;width:8px;height:1px;background:#000000;"></div>
<div style="left:625px;top:639px;font-size:15px;line-height:18px;color:#000000;white-space:nowrap;letter-spacing:1px;width:100px;text-align:right;">800</div>
<div style="left:732px;top:641px;width:4px;height:1px;background:#000000;"></div>
<div style="left:730px;top:635px;width:6px;height:1px;background:#000000;"></div>
<div style="left:732px;top:628px;width:4px;height:1px;background:#000000;"></div>
<div style="left:728px;top:622px;width:8px;height:1px;background:#000000;"></div>
<div style="left:625px;top:613px;font-size:15px;line-height:18px;color:#000000;white-space:nowrap;letter-spacing:1px;width:100px;text-align:right;">1,000</div>
<div style="left:745px;top:760px;width:535px;height:1px;background:#000000;"></div>
<div style="left:745px;top:761px;width:1px;height:8px;background:#000000;"></div>
<div style="left:695px;top:770px;font-size:15px;line-height:18px;color:#000000;white-space:nowrap;letter-spacing:1px;width:102px;text-align:center;">0</div>
<div style="left:772px;top:761px;width:1px;height:4px;background:#000000;"></div>
<div style="left:798px;top:761px;width:1px;height:6px;background:#000000;"></div>
<div style="left:825px;top:761px;width:1px;height:4px;background:#000000;"></div>
<div style="left:852px;top:761px;width:1px;height:8px;background:#000000;"></div>
<div style="left:802px;top:770px;font-size:15px;line-height:18px;color:#000000;white-space:nowrap;letter-spacing:1px;width:102px;text-align:center;">200</div>
<div style="left:878px;top:761px;width:1px;height:4px;background:#000000;"></div>
<div style="left:905px;top:761px;width:1px;height:6px;background:#000000;"></div>
<div style="left:932px;top:761px;width:1px;height:4px;background:#000000;"></div>
<div style="left:959px;top:761px;width:1px;height:8px;background:#000000;"></div>
<div style="left:909px;top:770px;font-size:15px;line-height:18px;color:#000000;white-space:nowrap;letter-spacing:1px;width:102px;text-align:center;">400</div>
<div style="left:985px;top:761px;width:1px;height:4px;background:#000000;"></div>
<div style="left:1012px;top:761px;width:1px;height:6px;background:#000000;"></div>
<div style="left:1039px;top:761px;width:1px;height:4px;background:#000000;"></div>
<div style="left:1065px;top:761px;width:1px;height:8px;background:#000000;"></div>
<div style="left:1015px;top:770px;font-size:15px;line-height:18px;color:#000000;white-space:nowrap;letter-spacing:1px;width:102px;text-align:center;">600</div>
<div style="left:1092px;top:761px;width:1px;height:4px;background:#000000;"></div>
<div style="left:1119px;top:761px;width:1px;height:6px;background:#000000;"></div>
<div style="left:1146px;top:761px;width:1px;height:4px;background:#000000;"></div>
<div style="left:1172px;top:761px;width:1px;height:8px;background:#000000;"></div>
<div style="left:1122px;top:770px;font-size:15px;line-height:18px;color:#000000;white-space:nowrap;letter-spacing:1px;width:102px;text-align:center;">800</div>
<div style="left:1199px;top:761px;width:1px;height:4px;background:#000000;"></div>
<div style="left:1226px;top:761px;width:1px;height:6px;background:#000000;"></div>
<div style="left:1252px;top:761px;width:1px;height:4px;background:#000000;"></div>
<div style="left:1279px;top:761px;width:1px;height:8px;background:#000000;"></div>
<div style="left:1229px;top:770px;font-size:15px;line-height:18px;color:#000000;white-space:nowrap;letter-spacing:1px;width:102px;text-align:center;">1,000</div>
<div style="left:675px;top:811px;font-size:15.5px;line-height:18px;color:#000000;white-space:nowrap;">Plot Spectrum:</div>
<div style="left:793px;top:809px;width:88px;height:23px;background:#ffffff;"></div>
<div style="left:793px;top:809px;width:88px;height:1px;background:#6a6864;"></div>
<div style="left:793px;top:809px;width:1px;height:23px;background:#6a6864;"></div>
<div style="left:793px;top:831px;width:88px;height:1px;background:#ffffff;"></div>
<div style="left:880px;top:809px;width:1px;height:23px;background:#ffffff;"></div>
<div style="left:794px;top:810px;width:86px;height:1px;background:#000000;"></div>
<div style="left:794px;top:810px;width:1px;height:21px;background:#000000;"></div>
<div style="left:794px;top:830px;width:86px;height:1px;background:#d4d0c8;"></div>
<div style="left:879px;top:811px;width:1px;height:20px;background:#d4d0c8;"></div>
<div style="left:798px;top:811px;font-size:15.5px;line-height:18px;color:#6a6864;white-space:nowrap;">0</div>
<div style="left:863px;top:811px;width:16px;height:9px;background:#d4d0c8;"></div>
<div style="left:863px;top:811px;width:16px;height:1px;background:#ffffff;"></div>
<div style="left:863px;top:811px;width:1px;height:9px;background:#ffffff;"></div>
<div style="left:863px;top:819px;width:16px;height:1px;background:#000000;"></div>
<div style="left:878px;top:811px;width:1px;height:9px;background:#000000;"></div>
<div style="left:864px;top:818px;width:14px;height:1px;background:#6a6864;"></div>
<div style="left:877px;top:812px;width:1px;height:7px;background:#6a6864;"></div>
<div style="left:870px;top:814px;width:1px;height:1px;background:#6a6864;"></div>
<div style="left:869px;top:815px;width:3px;height:1px;background:#6a6864;"></div>
<div style="left:863px;top:820px;width:16px;height:9px;background:#d4d0c8;"></div>
<div style="left:863px;top:820px;width:16px;height:1px;background:#ffffff;"></div>
<div style="left:863px;top:820px;width:1px;height:9px;background:#ffffff;"></div>
<div style="left:863px;top:828px;width:16px;height:1px;background:#000000;"></div>
<div style="left:878px;top:820px;width:1px;height:9px;background:#000000;"></div>
<div style="left:864px;top:827px;width:14px;height:1px;background:#6a6864;"></div>
<div style="left:877px;top:821px;width:1px;height:7px;background:#6a6864;"></div>
<div style="left:869px;top:823px;width:3px;height:1px;background:#6a6864;"></div>
<div style="left:870px;top:824px;width:1px;height:1px;background:#6a6864;"></div>
<div style="left:907px;top:807px;width:116px;height:27px;background:#d4d0c8;"></div>
<div style="left:907px;top:807px;width:116px;height:1px;background:#ffffff;"></div>
<div style="left:907px;top:807px;width:1px;height:27px;background:#ffffff;"></div>
<div style="left:907px;top:833px;width:116px;height:1px;background:#000000;"></div>
<div style="left:1022px;top:807px;width:1px;height:27px;background:#000000;"></div>
<div style="left:908px;top:832px;width:114px;height:1px;background:#6a6864;"></div>
<div style="left:1021px;top:808px;width:1px;height:25px;background:#6a6864;"></div>
<div style="left:909px;top:811px;width:112px;height:18px;overflow:hidden;font-size:15.5px;line-height:18px;white-space:nowrap"><span style="position:absolute;right:-9px;top:0">Plot Single Spectrum</span></div>
<div style="left:1040px;top:807px;width:153px;height:27px;background:#d4d0c8;"></div>
<div style="left:1040px;top:807px;width:153px;height:1px;background:#ffffff;"></div>
<div style="left:1040px;top:807px;width:1px;height:27px;background:#ffffff;"></div>
<div style="left:1040px;top:833px;width:153px;height:1px;background:#000000;"></div>
<div style="left:1192px;top:807px;width:1px;height:27px;background:#000000;"></div>
<div style="left:1041px;top:832px;width:151px;height:1px;background:#6a6864;"></div>
<div style="left:1191px;top:808px;width:1px;height:25px;background:#6a6864;"></div>
<div style="left:1040px;top:811px;font-size:15.5px;line-height:18px;color:#000000;white-space:nowrap;width:153px;text-align:center;">Plot Current Preview</div>
<div style="left:1210px;top:814px;width:13px;height:13px;background:#d4d0c8;"></div>
<div style="left:1210px;top:814px;width:13px;height:1px;background:#6a6864;"></div>
<div style="left:1210px;top:814px;width:1px;height:13px;background:#6a6864;"></div>
<div style="left:1210px;top:826px;width:13px;height:1px;background:#ffffff;"></div>
<div style="left:1222px;top:814px;width:1px;height:13px;background:#ffffff;"></div>
<div style="left:1211px;top:815px;width:11px;height:1px;background:#000000;"></div>
<div style="left:1211px;top:815px;width:1px;height:11px;background:#000000;"></div>
<div style="left:1211px;top:825px;width:11px;height:1px;background:#d4d0c8;"></div>
<div style="left:1221px;top:816px;width:1px;height:10px;background:#d4d0c8;"></div>
<div style="left:1229px;top:812px;font-size:15.5px;line-height:18px;color:#fff;white-space:nowrap;">Plot Guess</div>
<div style="left:1228px;top:811px;font-size:15.5px;line-height:18px;color:#6a6864;white-space:nowrap;">Plot Guess</div>
<div style="left:802px;top:869px;font-size:15.5px;line-height:18px;color:#fff;white-space:nowrap;width:275px;text-align:right;">Mask X Range of Spectrum</div>
<div style="left:801px;top:868px;font-size:15.5px;line-height:18px;color:#6a6864;white-space:nowrap;width:275px;text-align:right;">Mask X Range of Spectrum</div>
<div style="left:1082px;top:866px;width:213px;height:23px;background:#ffffff;"></div>
<div style="left:1082px;top:866px;width:213px;height:1px;background:#6a6864;"></div>
<div style="left:1082px;top:866px;width:1px;height:23px;background:#6a6864;"></div>
<div style="left:1082px;top:888px;width:213px;height:1px;background:#ffffff;"></div>
<div style="left:1294px;top:866px;width:1px;height:23px;background:#ffffff;"></div>
<div style="left:1083px;top:867px;width:211px;height:1px;background:#000000;"></div>
<div style="left:1083px;top:867px;width:1px;height:21px;background:#000000;"></div>
<div style="left:1083px;top:887px;width:211px;height:1px;background:#d4d0c8;"></div>
<div style="left:1293px;top:868px;width:1px;height:20px;background:#d4d0c8;"></div>
<div style="left:9px;top:912px;width:1307px;height:1px;background:#6a6864;"></div>
<div style="left:10px;top:913px;width:1307px;height:1px;background:#ffffff;"></div>
<div style="left:9px;top:912px;width:1px;height:46px;background:#6a6864;"></div>
<div style="left:10px;top:913px;width:1px;height:44px;background:#ffffff;"></div>
<div style="left:9px;top:957px;width:1307px;height:1px;background:#6a6864;"></div>
<div style="left:9px;top:958px;width:1308px;height:1px;background:#ffffff;"></div>
<div style="left:1315px;top:912px;width:1px;height:46px;background:#6a6864;"></div>
<div style="left:1316px;top:912px;width:1px;height:47px;background:#ffffff;"></div>
<div style="left:17px;top:906px;width:32px;height:10px;background:#d4d0c8;"></div>
<div style="left:19px;top:903px;font-size:15.5px;line-height:18px;color:#000000;white-space:nowrap;">Run</div>
<div style="left:626px;top:923px;width:75px;height:27px;background:#d4d0c8;"></div>
<div style="left:626px;top:923px;width:75px;height:1px;background:#ffffff;"></div>
<div style="left:626px;top:923px;width:1px;height:27px;background:#ffffff;"></div>
<div style="left:626px;top:949px;width:75px;height:1px;background:#000000;"></div>
<div style="left:700px;top:923px;width:1px;height:27px;background:#000000;"></div>
<div style="left:627px;top:948px;width:73px;height:1px;background:#6a6864;"></div>
<div style="left:699px;top:924px;width:1px;height:25px;background:#6a6864;"></div>
<div style="left:626px;top:927px;font-size:15.5px;line-height:18px;color:#000000;white-space:nowrap;width:75px;text-align:center;">Run</div>
<div style="left:9px;top:967px;width:1307px;height:1px;background:#6a6864;"></div>
<div style="left:10px;top:968px;width:1307px;height:1px;background:#ffffff;"></div>
<div style="left:9px;top:967px;width:1px;height:57px;background:#6a6864;"></div>
<div style="left:10px;top:968px;width:1px;height:55px;background:#ffffff;"></div>
<div style="left:9px;top:1023px;width:1307px;height:1px;background:#6a6864;"></div>
<div style="left:9px;top:1024px;width:1308px;height:1px;background:#ffffff;"></div>
<div style="left:1315px;top:967px;width:1px;height:57px;background:#6a6864;"></div>
<div style="left:1316px;top:967px;width:1px;height:58px;background:#ffffff;"></div>
<div style="left:17px;top:961px;width:54px;height:10px;background:#d4d0c8;"></div>
<div style="left:19px;top:958px;font-size:15.5px;line-height:18px;color:#000000;white-space:nowrap;">Output</div>
<div style="left:20px;top:991px;font-size:15.5px;line-height:18px;color:#000000;white-space:nowrap;">Plot:</div>
<div style="left:57px;top:989px;width:100px;height:23px;background:#ffffff;"></div>
<div style="left:57px;top:989px;width:100px;height:1px;background:#6a6864;"></div>
<div style="left:57px;top:989px;width:1px;height:23px;background:#6a6864;"></div>
<div style="left:57px;top:1011px;width:100px;height:1px;background:#ffffff;"></div>
<div style="left:156px;top:989px;width:1px;height:23px;background:#ffffff;"></div>
<div style="left:58px;top:990px;width:98px;height:1px;background:#000000;"></div>
<div style="left:58px;top:990px;width:1px;height:21px;background:#000000;"></div>
<div style="left:58px;top:1010px;width:98px;height:1px;background:#d4d0c8;"></div>
<div style="left:155px;top:991px;width:1px;height:20px;background:#d4d0c8;"></div>
<div style="left:139px;top:991px;width:16px;height:19px;background:#d4d0c8;"></div>
<div style="left:139px;top:991px;width:16px;height:1px;background:#ffffff;"></div>
<div style="left:139px;top:991px;width:1px;height:19px;background:#ffffff;"></div>
<div style="left:139px;top:1009px;width:16px;height:1px;background:#000000;"></div>
<div style="left:154px;top:991px;width:1px;height:19px;background:#000000;"></div>
<div style="left:140px;top:1008px;width:14px;height:1px;background:#6a6864;"></div>
<div style="left:153px;top:992px;width:1px;height:17px;background:#6a6864;"></div>
<div style="left:144px;top:999px;width:7px;height:1px;background:#ffffff;"></div>
<div style="left:145px;top:1000px;width:5px;height:1px;background:#ffffff;"></div>
<div style="left:146px;top:1001px;width:3px;height:1px;background:#ffffff;"></div>
<div style="left:147px;top:1002px;width:1px;height:1px;background:#ffffff;"></div>
<div style="left:143px;top:998px;width:7px;height:1px;background:#a0a0a4;"></div>
<div style="left:144px;top:999px;width:5px;height:1px;background:#a0a0a4;"></div>
<div style="left:145px;top:1000px;width:3px;height:1px;background:#a0a0a4;"></div>
<div style="left:146px;top:1001px;width:1px;height:1px;background:#a0a0a4;"></div>
<div style="left:163px;top:987px;width:75px;height:27px;background:#d4d0c8;"></div>
<div style="left:163px;top:987px;width:75px;height:1px;background:#ffffff;"></div>
<div style="left:163px;top:987px;width:1px;height:27px;background:#ffffff;"></div>
<div style="left:163px;top:1013px;width:75px;height:1px;background:#000000;"></div>
<div style="left:237px;top:987px;width:1px;height:27px;background:#000000;"></div>
<div style="left:164px;top:1012px;width:73px;height:1px;background:#6a6864;"></div>
<div style="left:236px;top:988px;width:1px;height:25px;background:#6a6864;"></div>
<div style="left:164px;top:992px;font-size:15.5px;line-height:18px;color:#fff;white-space:nowrap;width:75px;text-align:center;">Plot</div>
<div style="left:163px;top:991px;font-size:15.5px;line-height:18px;color:#6a6864;white-space:nowrap;width:75px;text-align:center;">Plot</div>
<div style="left:1214px;top:987px;width:92px;height:27px;background:#d4d0c8;"></div>
<div style="left:1214px;top:987px;width:92px;height:1px;background:#ffffff;"></div>
<div style="left:1214px;top:987px;width:1px;height:27px;background:#ffffff;"></div>
<div style="left:1214px;top:1013px;width:92px;height:1px;background:#000000;"></div>
<div style="left:1305px;top:987px;width:1px;height:27px;background:#000000;"></div>
<div style="left:1215px;top:1012px;width:90px;height:1px;background:#6a6864;"></div>
<div style="left:1304px;top:988px;width:1px;height:25px;background:#6a6864;"></div>
<div style="left:1215px;top:992px;font-size:15.5px;line-height:18px;color:#fff;white-space:nowrap;width:92px;text-align:center;">Save Result</div>
<div style="left:1214px;top:991px;font-size:15.5px;line-height:18px;color:#6a6864;white-space:nowrap;width:92px;text-align:center;">Save Result</div>
</body></html>
